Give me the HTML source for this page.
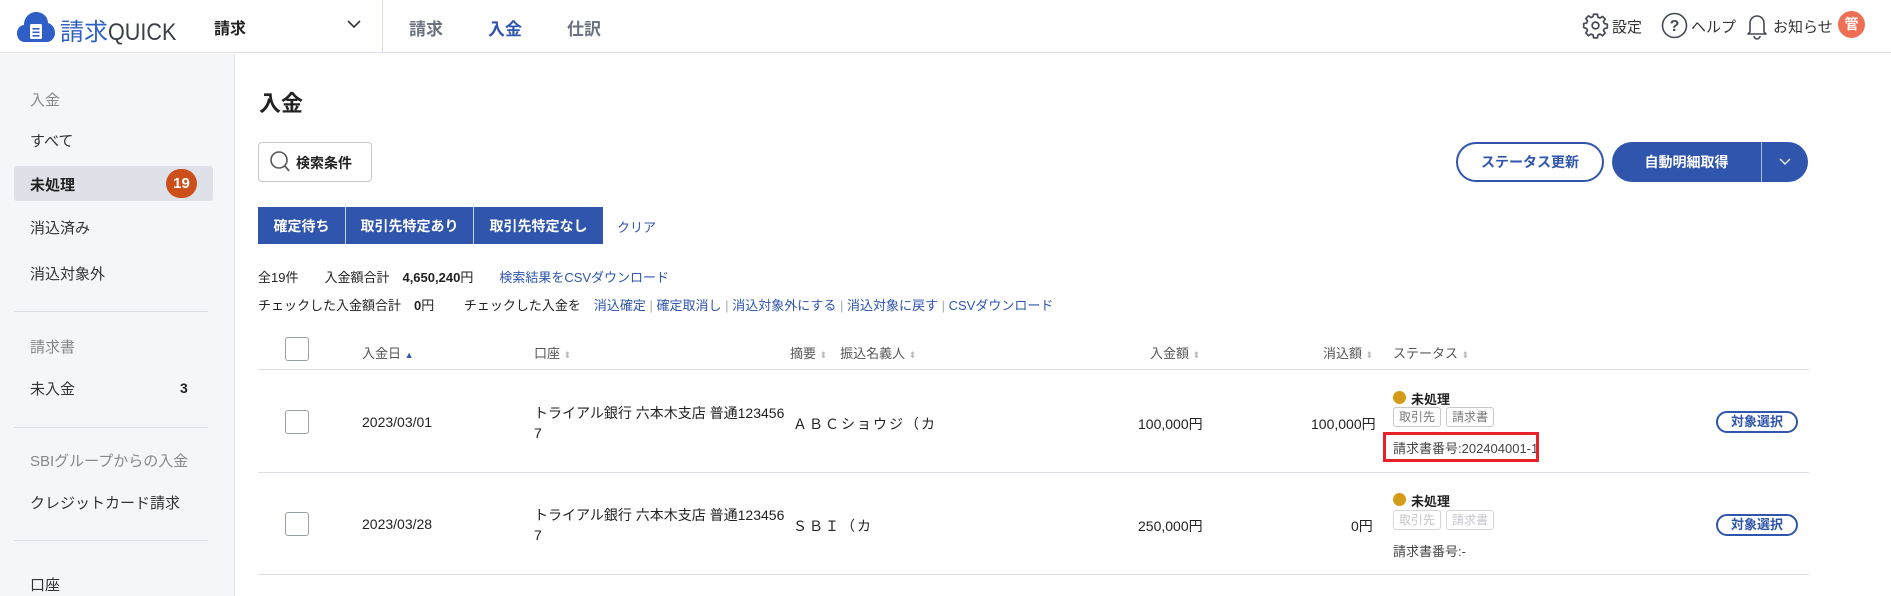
<!DOCTYPE html>
<html><head><meta charset="utf-8"><style>
*{box-sizing:border-box;margin:0;padding:0}
body{width:1891px;height:596px;overflow:hidden;background:#fff;font-family:"Liberation Sans","Noto Sans CJK JP",sans-serif;color:#222;position:relative;font-size:14px}
.a{position:absolute;white-space:nowrap}
.hdr{position:absolute;left:0;top:0;width:1891px;height:53px;border-bottom:1px solid #dcdde6;background:#fff}
.side{position:absolute;left:0;top:54px;width:235px;height:542px;background:#f5f6fa;border-right:1px solid #e2e4ea}
.si{position:absolute;left:30px;font-size:15px;color:#333}
.div{position:absolute;left:14px;width:194px;height:1px;background:#dcdde4}
.blue{color:#2f55ad}
.tab{position:absolute;top:207px;height:37px;background:#2f55ad;color:#fff;font-weight:bold;font-size:14px;display:flex;align-items:center;justify-content:center;border-right:1px solid #c8d2ea}
.th{position:absolute;top:343px;font-size:13px;color:#555}
.cb{position:absolute;width:24px;height:24px;border:1.5px solid #9aa0aa;border-radius:3px;background:#fff}
.tag{position:absolute;height:20px;border:1px solid #c7c9cf;border-radius:3px;font-size:12px;color:#777;line-height:18px;padding:0 5px}
.btn{position:absolute;width:82px;height:22px;border:2px solid #2f55ad;border-radius:11px;color:#2f55ad;font-weight:bold;font-size:13px;text-align:center;line-height:18px}
.dot{position:absolute;width:13px;height:13px;border-radius:50%;background:#d49a18}
</style></head><body>
<div class="hdr"></div>
<svg class="a" style="left:17px;top:11px" width="38" height="32" viewBox="0 0 38 32"><path d="M8 31 C2 31 0 26 0 22 C0 17 4 14 7 14 C7 6 13 1 19 1 C26 1 31 6 31 12 C35 13 38 17 38 22 C38 27 34 31 30 31Z" fill="#2f5fc6"/><rect x="13" y="13" width="12" height="15" rx="1.5" fill="#fff"/><rect x="15.5" y="17" width="7" height="1.6" fill="#2f5fc6"/><rect x="15.5" y="20.5" width="7" height="1.6" fill="#2f5fc6"/><rect x="15.5" y="24" width="7" height="1.6" fill="#2f5fc6"/></svg>
<div class="a" style="left:60px;top:12px;font-size:24px;color:#2f5fc6">請求<span style="color:#3a3f48;display:inline-block;transform:scaleX(0.9);transform-origin:left">QUICK</span></div>
<div class="a" style="left:214px;top:15px;font-size:16px;font-weight:bold">請求</div>
<svg class="a" style="left:347px;top:20px" width="14" height="9"><path d="M1 1 L7 7 L13 1" stroke="#333" stroke-width="1.6" fill="none"/></svg>
<div class="a" style="left:382px;top:0;width:1px;height:53px;background:#dcdde6"></div>
<div class="a" style="left:409px;top:15px;font-size:17px;font-weight:bold;color:#6b7280">請求</div>
<div class="a" style="left:488px;top:15px;font-size:17px;font-weight:bold;color:#2f55ad">入金</div>
<div class="a" style="left:567px;top:15px;font-size:17px;font-weight:bold;color:#6b7280">仕訳</div>
<svg class="a" style="left:1582px;top:12px" width="27" height="27" viewBox="0 0 24 24"><path d="M10.3 2h3.4l.5 2.6 1.8.8 2.2-1.5 2.4 2.4-1.5 2.2.8 1.8 2.6.5v3.4l-2.6.5-.8 1.8 1.5 2.2-2.4 2.4-2.2-1.5-1.8.8-.5 2.6h-3.4l-.5-2.6-1.8-.8-2.2 1.5-2.4-2.4 1.5-2.2-.8-1.8L1.5 13.7v-3.4l2.6-.5.8-1.8-1.5-2.2 2.4-2.4 2.2 1.5 1.8-.8z" fill="none" stroke="#444a55" stroke-width="1.5" stroke-linejoin="round"/><circle cx="12" cy="12" r="3" fill="none" stroke="#444a55" stroke-width="1.5"/></svg>
<div class="a" style="left:1612px;top:16px;font-size:15px;color:#333">設定</div>
<svg class="a" style="left:1661px;top:12px" width="27" height="27"><circle cx="13.5" cy="13.5" r="12" fill="none" stroke="#444a55" stroke-width="1.6"/><text x="13.5" y="19" text-anchor="middle" font-size="16" font-weight="bold" fill="#444a55" font-family="Liberation Sans">?</text></svg>
<div class="a" style="left:1691px;top:16px;font-size:15px;color:#333">ヘルプ</div>
<svg class="a" style="left:1746px;top:12px" width="22" height="28"><path d="M4 20 V11 a7 7 0 0 1 14 0 V20 L20 22 H2 Z" fill="none" stroke="#444a55" stroke-width="1.6" stroke-linejoin="round"/><path d="M8 24 a3 3 0 0 0 6 0" fill="none" stroke="#444a55" stroke-width="1.6"/></svg>
<div class="a" style="left:1773px;top:16px;font-size:15px;color:#333">お知らせ</div>
<div class="a" style="left:1838px;top:11px;width:27px;height:27px;border-radius:50%;background:#ef6f55;color:#fff;font-size:14px;font-weight:bold;text-align:center;line-height:27px">管</div>

<div class="side"></div>
<div class="si" style="top:89px;color:#888">入金</div>
<div class="si" style="top:130px">すべて</div>
<div class="a" style="left:14px;top:166px;width:199px;height:35px;background:#dfe1e8;border-radius:3px"></div>
<div class="si" style="top:174px;font-weight:bold;color:#222">未処理</div>
<div class="a" style="left:166px;top:169px;width:31px;height:29px;border-radius:15px;background:#cc4f1b;color:#fff;font-weight:bold;font-size:15px;text-align:center;line-height:29px">19</div>
<div class="si" style="top:217px">消込済み</div>
<div class="si" style="top:263px">消込対象外</div>
<div class="div" style="top:311px"></div>
<div class="si" style="top:336px;color:#888">請求書</div>
<div class="si" style="top:378px">未入金</div>
<div class="a" style="left:180px;top:380px;font-size:14px;font-weight:bold">3</div>
<div class="div" style="top:427px"></div>
<div class="si" style="top:450px;color:#888">SBIグループからの入金</div>
<div class="si" style="top:492px">クレジットカード請求</div>
<div class="div" style="top:540px"></div>
<div class="si" style="top:574px">口座</div>

<div class="a" style="left:259px;top:86px;font-size:22px;font-weight:bold">入金</div>
<div class="a" style="left:258px;top:142px;width:114px;height:40px;border:1.5px solid #c5c8d0;border-radius:4px"></div>
<svg class="a" style="left:269px;top:150px" width="22" height="24"><circle cx="10" cy="10" r="8" fill="none" stroke="#555" stroke-width="1.6"/><path d="M16 16 L20 21" stroke="#555" stroke-width="1.8"/></svg>
<div class="a" style="left:296px;top:153px;font-size:14px;font-weight:bold">検索条件</div>
<div class="tab" style="left:258px;width:88px">確定待ち</div>
<div class="tab" style="left:346px;width:128px">取引先特定あり</div>
<div class="tab" style="left:474px;width:129px;border-right:none">取引先特定なし</div>
<div class="a blue" style="left:617px;top:217px;font-size:13px">クリア</div>
<div class="a" style="left:1456px;top:142px;width:148px;height:40px;border:2px solid #2f55ad;border-radius:20px;color:#2f55ad;font-weight:bold;font-size:14px;text-align:center;line-height:36px">ステータス更新</div>
<div class="a" style="left:1612px;top:142px;width:196px;height:40px;background:#2f55ad;border-radius:20px"></div>
<div class="a" style="left:1612px;top:142px;width:149px;height:40px;color:#fff;font-weight:bold;font-size:14px;text-align:center;line-height:40px">自動明細取得</div>
<div class="a" style="left:1761px;top:142px;width:1px;height:40px;background:#aebbdc"></div>
<svg class="a" style="left:1779px;top:158px" width="12" height="8"><path d="M1 1 L6 6 L11 1" stroke="#fff" stroke-width="1.3" fill="none"/></svg>

<div class="a" style="left:258px;top:267px;font-size:13px">全19件　　入金額合計　<b>4,650,240</b>円　　<span class="blue">検索結果をCSVダウンロード</span></div>
<div class="a" style="left:258px;top:295px;font-size:13px">チェックした入金額合計　<b>0</b>円　　 チェックした入金を　<span class="blue">消込確定</span> <span style="color:#aaa">|</span> <span class="blue">確定取消し</span> <span style="color:#aaa">|</span> <span class="blue">消込対象外にする</span> <span style="color:#aaa">|</span> <span class="blue">消込対象に戻す</span> <span style="color:#aaa">|</span> <span class="blue">CSVダウンロード</span></div>

<div class="cb" style="left:285px;top:337px"></div>
<div class="th" style="left:362px">入金日 <span style="color:#2f55ad;font-size:9px">▲</span></div>
<div class="th" style="left:534px">口座 <span style="color:#bbb;font-size:9px">⬍</span></div>
<div class="th" style="left:790px">摘要 <span style="color:#bbb;font-size:9px">⬍</span>　振込名義人 <span style="color:#bbb;font-size:9px">⬍</span></div>
<div class="th" style="left:1150px">入金額 <span style="color:#bbb;font-size:9px">⬍</span></div>
<div class="th" style="left:1323px">消込額 <span style="color:#bbb;font-size:9px">⬍</span></div>
<div class="th" style="left:1393px">ステータス <span style="color:#bbb;font-size:9px">⬍</span></div>
<div class="a" style="left:258px;top:369px;width:1551px;height:1px;background:#dcdee5"></div>
<div class="a" style="left:258px;top:472px;width:1551px;height:1px;background:#dcdee5"></div>
<div class="a" style="left:258px;top:574px;width:1551px;height:1px;background:#dcdee5"></div>

<div class="cb" style="left:285px;top:410px"></div>
<div class="a" style="left:362px;top:414px;font-size:14px">2023/03/01</div>
<div class="a" style="left:534px;top:403px;font-size:14px;line-height:20px">トライアル銀行 六本木支店 普通123456<br>7</div>
<div class="a" style="left:793px;top:414px;font-size:14px;letter-spacing:2px">ＡＢＣショウジ（カ</div>
<div class="a" style="left:1138px;top:414px;font-size:14px">100,000円</div>
<div class="a" style="left:1311px;top:414px;font-size:14px">100,000円</div>
<div class="dot" style="left:1393px;top:391px"></div>
<div class="a" style="left:1411px;top:389px;font-size:13px;font-weight:bold">未処理</div>
<div class="tag" style="left:1393px;top:407px">取引先</div>
<div class="tag" style="left:1446px;top:407px">請求書</div>
<div class="a" style="left:1393px;top:438px;font-size:13px;color:#444">請求書番号:202404001-1</div>
<div class="a" style="left:1383px;top:432px;width:156px;height:30px;border:3px solid #e8202a"></div>
<div class="btn" style="left:1716px;top:411px">対象選択</div>

<div class="cb" style="left:285px;top:512px"></div>
<div class="a" style="left:362px;top:516px;font-size:14px">2023/03/28</div>
<div class="a" style="left:534px;top:505px;font-size:14px;line-height:20px">トライアル銀行 六本木支店 普通123456<br>7</div>
<div class="a" style="left:793px;top:516px;font-size:14px;letter-spacing:2px">ＳＢＩ（カ</div>
<div class="a" style="left:1138px;top:516px;font-size:14px">250,000円</div>
<div class="a" style="left:1351px;top:516px;font-size:14px">0円</div>
<div class="dot" style="left:1393px;top:493px"></div>
<div class="a" style="left:1411px;top:491px;font-size:13px;font-weight:bold">未処理</div>
<div class="tag" style="left:1393px;top:510px;color:#c4c6cc;border-color:#d4d6dc">取引先</div>
<div class="tag" style="left:1446px;top:510px;color:#c4c6cc;border-color:#d4d6dc">請求書</div>
<div class="a" style="left:1393px;top:541px;font-size:13px;color:#444">請求書番号:-</div>
<div class="btn" style="left:1716px;top:514px">対象選択</div>
</body></html>
